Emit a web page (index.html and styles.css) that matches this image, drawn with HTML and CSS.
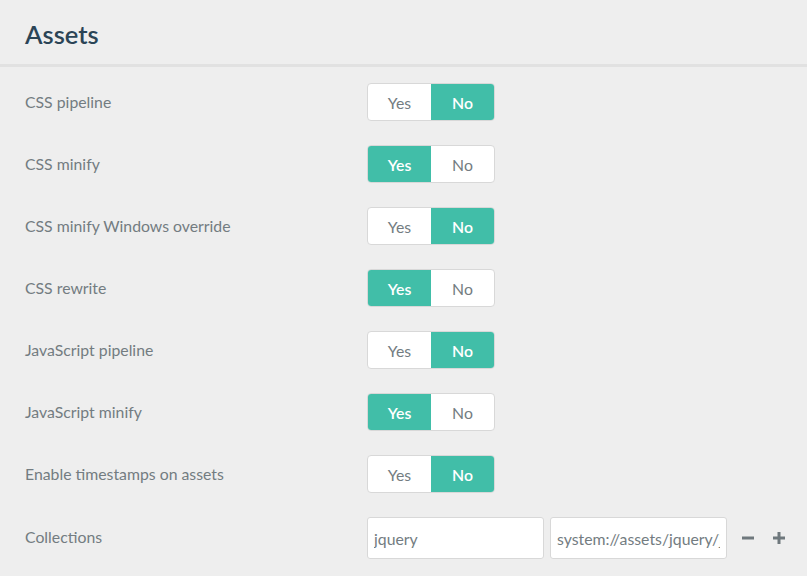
FILE: index.html
```html
<!DOCTYPE html>
<html>
<head>
<meta charset="utf-8">
<link rel="stylesheet" href="styles.css">
</head>
<body>
<header class="header"><h1 class="title">Assets</h1></header>
<div class="form">
  <div class="row"><div class="label">CSS pipeline</div><div class="toggle"><span class="opt">Yes</span><span class="opt on">No</span></div></div>
  <div class="row"><div class="label">CSS minify</div><div class="toggle"><span class="opt on">Yes</span><span class="opt">No</span></div></div>
  <div class="row"><div class="label">CSS minify Windows override</div><div class="toggle"><span class="opt">Yes</span><span class="opt on">No</span></div></div>
  <div class="row"><div class="label">CSS rewrite</div><div class="toggle"><span class="opt on">Yes</span><span class="opt">No</span></div></div>
  <div class="row"><div class="label">JavaScript pipeline</div><div class="toggle"><span class="opt">Yes</span><span class="opt on">No</span></div></div>
  <div class="row"><div class="label">JavaScript minify</div><div class="toggle"><span class="opt on">Yes</span><span class="opt">No</span></div></div>
  <div class="row"><div class="label">Enable timestamps on assets</div><div class="toggle"><span class="opt">Yes</span><span class="opt on">No</span></div></div>
  <div class="row row-coll"><div class="label">Collections</div>
    <div class="coll">
      <input class="input" type="text" value="jquery" readonly>
      <input class="input" type="text" value="system://assets/jquery/jquery-2.x.min.js" readonly>
      <svg class="icon" width="14" height="14" viewBox="0 0 14 14"><rect x="1" y="5.5" width="12" height="3" fill="#6f787d"/></svg>
      <svg class="icon" width="14" height="14" viewBox="0 0 14 14"><rect x="1" y="5.5" width="12" height="3" fill="#6f787d"/><rect x="5.5" y="1" width="3" height="12" fill="#6f787d"/></svg>
    </div>
  </div>
</div>
</body>
</html>
```
FILE: styles.css
```css
html, body {
  margin: 0;
  padding: 0;
  background: #eeeeee;
  font-family: Lato, "Open Sans", sans-serif;
  color: #737c81;
}
.header {
  height: 64px;
  border-bottom: 3px solid #e1e1e1;
  box-sizing: content-box;
  display: flex;
  align-items: center;
  padding-left: 25px;
}
.title {
  margin: 0;
  font-size: 25.5px;
  font-weight: 600;
  color: #2b4456;
  padding-top: 4px;
}
.form {
  padding: 16px 0 0 25px;
  display: flex;
  flex-direction: column;
  gap: 24px;
}
.row {
  display: flex;
  align-items: center;
  height: 38px;
}
.row-coll {
  height: 42px;
}
.label {
  width: 342px;
  font-size: 15.8px;
  flex-shrink: 0;
  padding-bottom: 1px;
}
.row-coll .label {
  padding-bottom: 4px;
}
.toggle {
  display: flex;
  width: 128px;
  height: 38px;
  box-sizing: border-box;
  border: 1px solid #d8d8d8;
  border-radius: 4px;
  background: #fff;
  overflow: hidden;
}
.opt {
  flex: 1;
  display: flex;
  align-items: center;
  justify-content: center;
  font-size: 15.8px;
  color: #737c81;
}
.opt.on {
  background: #41bea8;
  color: #fff;
  font-weight: 600;
}
.coll {
  display: flex;
  align-items: center;
  gap: 6px;
}
.input {
  width: 177px;
  height: 42px;
  box-sizing: border-box;
  margin: 0;
  border: 1px solid #d8d8d8;
  border-radius: 3px;
  background: #fff;
  font-family: Lato, "Open Sans", sans-serif;
  font-size: 15.8px;
  color: #737c81;
  padding: 0 6px;
  outline: none;
}
.icon {
  display: block;
}
.coll .input + .input + .icon {
  margin-left: 8px;
}
.coll .icon + .icon {
  margin-left: 11px;
}
```
